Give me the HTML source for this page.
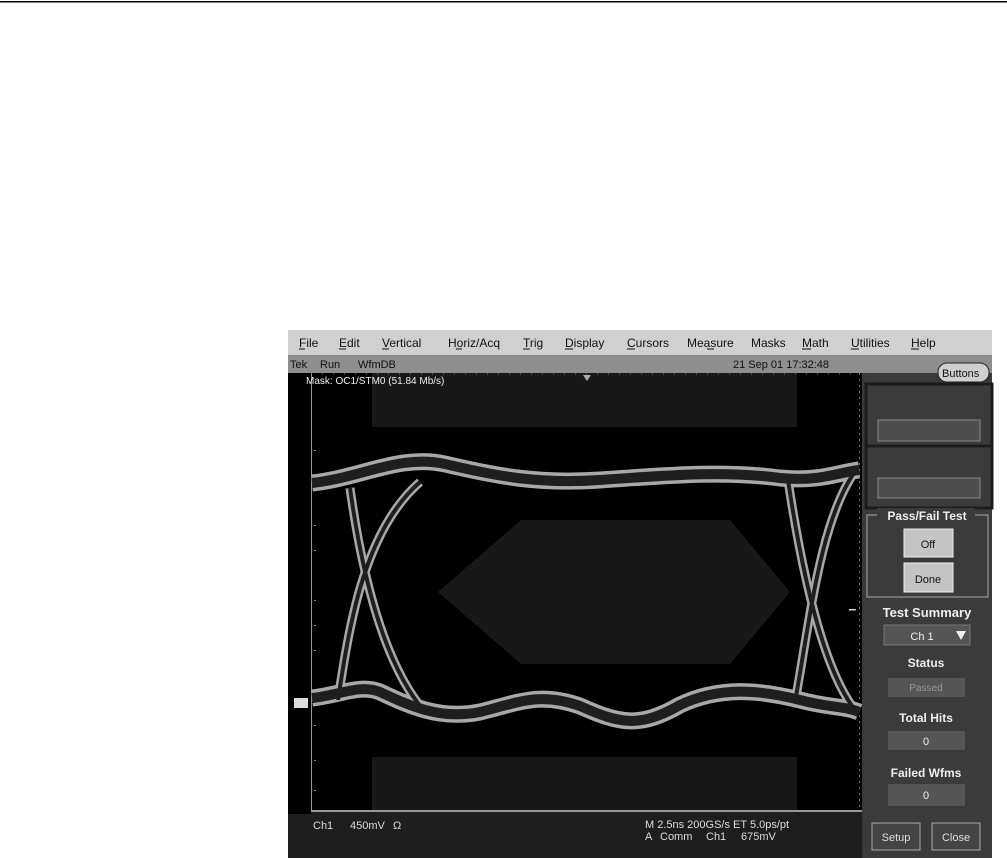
<!DOCTYPE html>
<html><head><meta charset="utf-8"><style>
html,body{margin:0;padding:0;background:#fff;}
svg{display:block;}
text{font-family:"Liberation Sans",sans-serif;}
</style></head><body>
<svg width="1007" height="858" viewBox="0 0 1007 858" xmlns="http://www.w3.org/2000/svg">
<rect x="0" y="0" width="1007" height="858" fill="#fff"/>
<rect x="0" y="1" width="1007" height="1.5" fill="#000"/>
<rect x="288" y="330" width="704" height="25" fill="#d0d0d0"/>
<g font-size="12" fill="#111">
<text x="299" y="347">File</text><text x="339" y="347">Edit</text><text x="382" y="347">Vertical</text>
<text x="448" y="347">Horiz/Acq</text><text x="523" y="347">Trig</text><text x="565" y="347">Display</text>
<text x="627" y="347">Cursors</text><text x="687" y="347">Measure</text><text x="751" y="347">Masks</text>
<text x="802" y="347">Math</text><text x="851" y="347">Utilities</text><text x="911" y="347">Help</text>
</g>
<g stroke="#111" stroke-width="1">
<line x1="299" y1="349" x2="305" y2="349"/><line x1="339" y1="349" x2="346" y2="349"/><line x1="382" y1="349" x2="389" y2="349"/>
<line x1="456" y1="349" x2="462" y2="349"/><line x1="523" y1="349" x2="530" y2="349"/><line x1="565" y1="349" x2="573" y2="349"/>
<line x1="627" y1="349" x2="635" y2="349"/><line x1="707" y1="349" x2="714" y2="349"/><line x1="802" y1="349" x2="811" y2="349"/>
<line x1="851" y1="349" x2="859" y2="349"/><line x1="911" y1="349" x2="919" y2="349"/>
</g>
<rect x="288" y="355" width="704" height="18" fill="#8e8e8e"/>
<g font-size="11" fill="#111">
<text x="290" y="368">Tek</text><text x="320" y="368">Run</text><text x="358" y="368">WfmDB</text>
<text x="733" y="368">21 Sep 01 17:32:48</text>
</g>
<rect x="862" y="373" width="130" height="485" fill="#3b3b3b"/>
<rect x="862" y="355" width="130" height="18" fill="#8e8e8e"/>
<rect x="938" y="363" width="51" height="19" rx="9" fill="#cfcfcf" stroke="#222" stroke-width="1"/>
<text x="942" y="377" font-size="11" fill="#111">Buttons</text>
<rect x="866" y="384" width="126" height="62" fill="none" stroke="#1c1c1c" stroke-width="3"/>
<rect x="878" y="420" width="102" height="21" fill="#4e4e4e" stroke="#888" stroke-width="1"/>
<rect x="866" y="446" width="126" height="62" fill="none" stroke="#1c1c1c" stroke-width="3"/>
<rect x="878" y="478" width="102" height="20" fill="#4e4e4e" stroke="#888" stroke-width="1"/>
<rect x="867" y="515" width="121" height="82" fill="none" stroke="#aaa" stroke-width="1"/>
<rect x="877" y="508" width="98" height="14" fill="#3b3b3b"/>
<text x="927" y="520" font-size="12" font-weight="bold" fill="#eee" text-anchor="middle">Pass/Fail Test</text>
<rect x="904" y="529" width="49" height="28" fill="#c4c4c4" stroke="#eee" stroke-width="1"/>
<text x="928" y="548" font-size="11" fill="#111" text-anchor="middle">Off</text>
<rect x="904" y="563" width="49" height="29" fill="#c4c4c4" stroke="#eee" stroke-width="1"/>
<text x="928" y="583" font-size="11" fill="#111" text-anchor="middle">Done</text>
<text x="927" y="617" font-size="13" font-weight="bold" fill="#eee" text-anchor="middle">Test Summary</text>
<rect x="884" y="625" width="86" height="20" fill="#555" stroke="#777"/>
<text x="922" y="640" font-size="11" fill="#eee" text-anchor="middle">Ch 1</text>
<path d="M956 631 L966 631 L961 640 Z" fill="#eee"/>
<text x="926" y="667" font-size="12" font-weight="bold" fill="#eee" text-anchor="middle">Status</text>
<rect x="888" y="678" width="77" height="19" fill="#555"/>
<text x="926" y="691" font-size="10" fill="#999" text-anchor="middle">Passed</text>
<text x="926" y="722" font-size="12" font-weight="bold" fill="#eee" text-anchor="middle">Total Hits</text>
<rect x="888" y="731" width="77" height="19" fill="#555"/>
<text x="926" y="745" font-size="11" fill="#eee" text-anchor="middle">0</text>
<text x="926" y="777" font-size="12" font-weight="bold" fill="#eee" text-anchor="middle">Failed Wfms</text>
<rect x="888" y="784" width="77" height="22" fill="#555"/>
<text x="926" y="799" font-size="11" fill="#eee" text-anchor="middle">0</text>
<rect x="872" y="823" width="48" height="27" fill="#444" stroke="#aaa"/>
<text x="896" y="841" font-size="11" fill="#ddd" text-anchor="middle">Setup</text>
<rect x="932" y="823" width="48" height="27" fill="#444" stroke="#aaa"/>
<text x="956" y="841" font-size="11" fill="#ddd" text-anchor="middle">Close</text>
<rect x="288" y="373" width="574" height="440" fill="#000"/>
<rect x="372" y="373" width="425" height="54" fill="#181818"/>
<rect x="372" y="757" width="425" height="55" fill="#181818"/>
<path d="M438 592 L521 520 L730 520 L790 592 L730 664 L521 664 Z" fill="#181818"/>
<line x1="311.5" y1="373" x2="311.5" y2="812" stroke="#999" stroke-width="1"/>
<line x1="859.5" y1="373" x2="859.5" y2="812" stroke="#777" stroke-width="1" stroke-dasharray="2 4"/>
<line x1="311" y1="811" x2="862" y2="811" stroke="#999" stroke-width="2"/>
<line x1="311" y1="374" x2="860" y2="374" stroke="#777" stroke-width="1" stroke-dasharray="1 10"/>
<path d="M583 375 L591 375 L587 381 Z" fill="#aaa"/>
<text x="306" y="384" font-size="10" fill="#eee">Mask: OC1/STM0 (51.84 Mb/s)</text>
<g fill="#888"><rect x="314" y="450" width="2" height="1"/><rect x="314" y="475" width="2" height="1"/><rect x="314" y="525" width="2" height="1"/><rect x="314" y="550" width="2" height="1"/><rect x="314" y="600" width="2" height="1"/><rect x="314" y="625" width="2" height="1"/><rect x="314" y="650" width="2" height="1"/><rect x="314" y="725" width="2" height="1"/><rect x="314" y="760" width="2" height="1"/><rect x="314" y="790" width="2" height="1"/></g>
<rect x="849" y="609" width="7" height="1.5" fill="#ccc"/>
<rect x="294" y="698" width="14" height="10" fill="#ddd"/>
<g fill="none" stroke-linecap="butt">
<g stroke="#a8a8a8" stroke-width="17">
<path d="M312 483 C360 478 400 454 445 464 C500 477 540 484 600 480 C660 476 720 470 780 478 C820 482 840 472 859 470"/>
<path d="M312 698 C340 695 360 684 380 692 C410 706 440 720 480 712 C520 702 540 692 580 706 C620 724 640 728 680 705 C720 686 760 690 800 700 C830 708 845 706 859 712"/>
</g>
<g stroke="#a8a8a8" stroke-width="9">
<path d="M350 488 C360 560 380 660 425 712"/>
<path d="M338 700 C350 620 365 530 420 482"/>
<path d="M788 480 C800 560 820 660 852 706"/>
<path d="M795 702 C810 620 820 520 856 470"/>
</g>
<g stroke="#1e1e1e" stroke-width="10">
<path d="M312 483 C360 478 400 454 445 464 C500 477 540 484 600 480 C660 476 720 470 780 478 C820 482 840 472 859 470"/>
<path d="M312 698 C340 695 360 684 380 692 C410 706 440 720 480 712 C520 702 540 692 580 706 C620 724 640 728 680 705 C720 686 760 690 800 700 C830 708 845 706 859 712"/>
</g>
<g stroke="#1e1e1e" stroke-width="4">
<path d="M350 488 C360 560 380 660 425 712"/>
<path d="M338 700 C350 620 365 530 420 482"/>
<path d="M788 480 C800 560 820 660 852 706"/>
<path d="M795 702 C810 620 820 520 856 470"/>
</g>
</g>
<rect x="288" y="812" width="574" height="46" fill="#1e1e1e"/>
<rect x="288" y="812" width="23" height="2" fill="#000"/>
<g font-size="11" fill="#ddd">
<text x="313" y="829">Ch1</text><text x="350" y="829">450mV</text><text x="393" y="829">Ω</text>
<text x="645" y="828">M 2.5ns 200GS/s ET 5.0ps/pt</text>
<text x="645" y="840">A</text><text x="660" y="840">Comm</text><text x="706" y="840">Ch1</text><text x="741" y="840">675mV</text>
</g>
</svg>
</body></html>
